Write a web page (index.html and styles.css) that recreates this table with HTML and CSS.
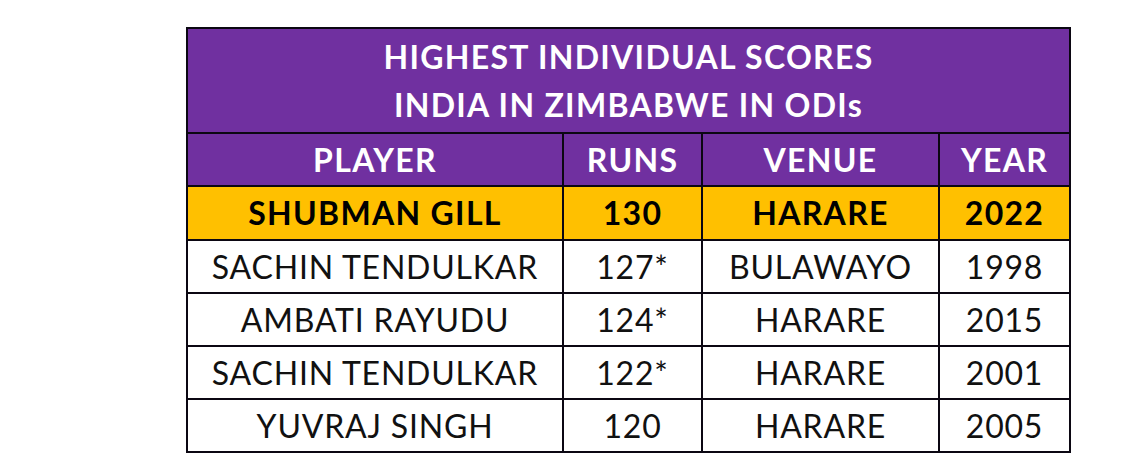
FILE: index.html
```html
<!DOCTYPE html>
<html>
<head>
<meta charset="utf-8">
<link rel="stylesheet" href="styles.css">
</head>
<body>
<div class="page">
<table class="scores">
  <colgroup>
    <col class="c-player">
    <col class="c-runs">
    <col class="c-venue">
    <col class="c-year">
  </colgroup>
  <thead>
    <tr class="title-row">
      <th colspan="4">HIGHEST INDIVIDUAL SCORES<br>INDIA IN ZIMBABWE IN ODIs</th>
    </tr>
    <tr class="head-row">
      <th>PLAYER</th>
      <th>RUNS</th>
      <th>VENUE</th>
      <th>YEAR</th>
    </tr>
  </thead>
  <tbody>
    <tr class="top-row">
      <td>SHUBMAN GILL</td>
      <td>130</td>
      <td>HARARE</td>
      <td>2022</td>
    </tr>
    <tr>
      <td>SACHIN TENDULKAR</td>
      <td>127*</td>
      <td>BULAWAYO</td>
      <td>1998</td>
    </tr>
    <tr>
      <td>AMBATI RAYUDU</td>
      <td>124*</td>
      <td>HARARE</td>
      <td>2015</td>
    </tr>
    <tr>
      <td>SACHIN TENDULKAR</td>
      <td>122*</td>
      <td>HARARE</td>
      <td>2001</td>
    </tr>
    <tr>
      <td>YUVRAJ SINGH</td>
      <td>120</td>
      <td>HARARE</td>
      <td>2005</td>
    </tr>
  </tbody>
</table>
</div>
</body>
</html>
```

FILE: styles.css
```css
html, body {
  margin: 0;
  padding: 0;
  background: #ffffff;
}

.page {
  padding: 27px 0 0 186px;
}

.scores {
  border-collapse: collapse;
  table-layout: fixed;
  width: 885px;
  font-family: "Lato", "Liberation Sans", sans-serif;
  font-size: 32px;
  color: #111111;
  letter-spacing: 0.8px;
}

.c-player { width: 376px; }
.c-runs { width: 139px; }
.c-venue { width: 237px; }
.c-year { width: 131px; }

.scores th,
.scores td {
  border: 2px solid #0b0712;
  text-align: center;
  vertical-align: middle;
  padding: 0;
  line-height: 1;
  white-space: nowrap;
}

.title-row th {
  background: #7030a0;
  color: #ffffff;
  font-weight: 700;
  height: 103px;
  line-height: 48px;
  letter-spacing: 1.3px;
}

.head-row th {
  background: #7030a0;
  color: #ffffff;
  font-weight: 700;
  height: 51px;
  letter-spacing: 1.3px;
}

.top-row td {
  background: #ffc000;
  color: #000000;
  font-weight: 700;
  height: 52px;
  letter-spacing: 1.3px;
}

.scores tbody tr td {
  height: 51px;
}

.scores tbody tr.top-row td {
  height: 52px;
}
```
